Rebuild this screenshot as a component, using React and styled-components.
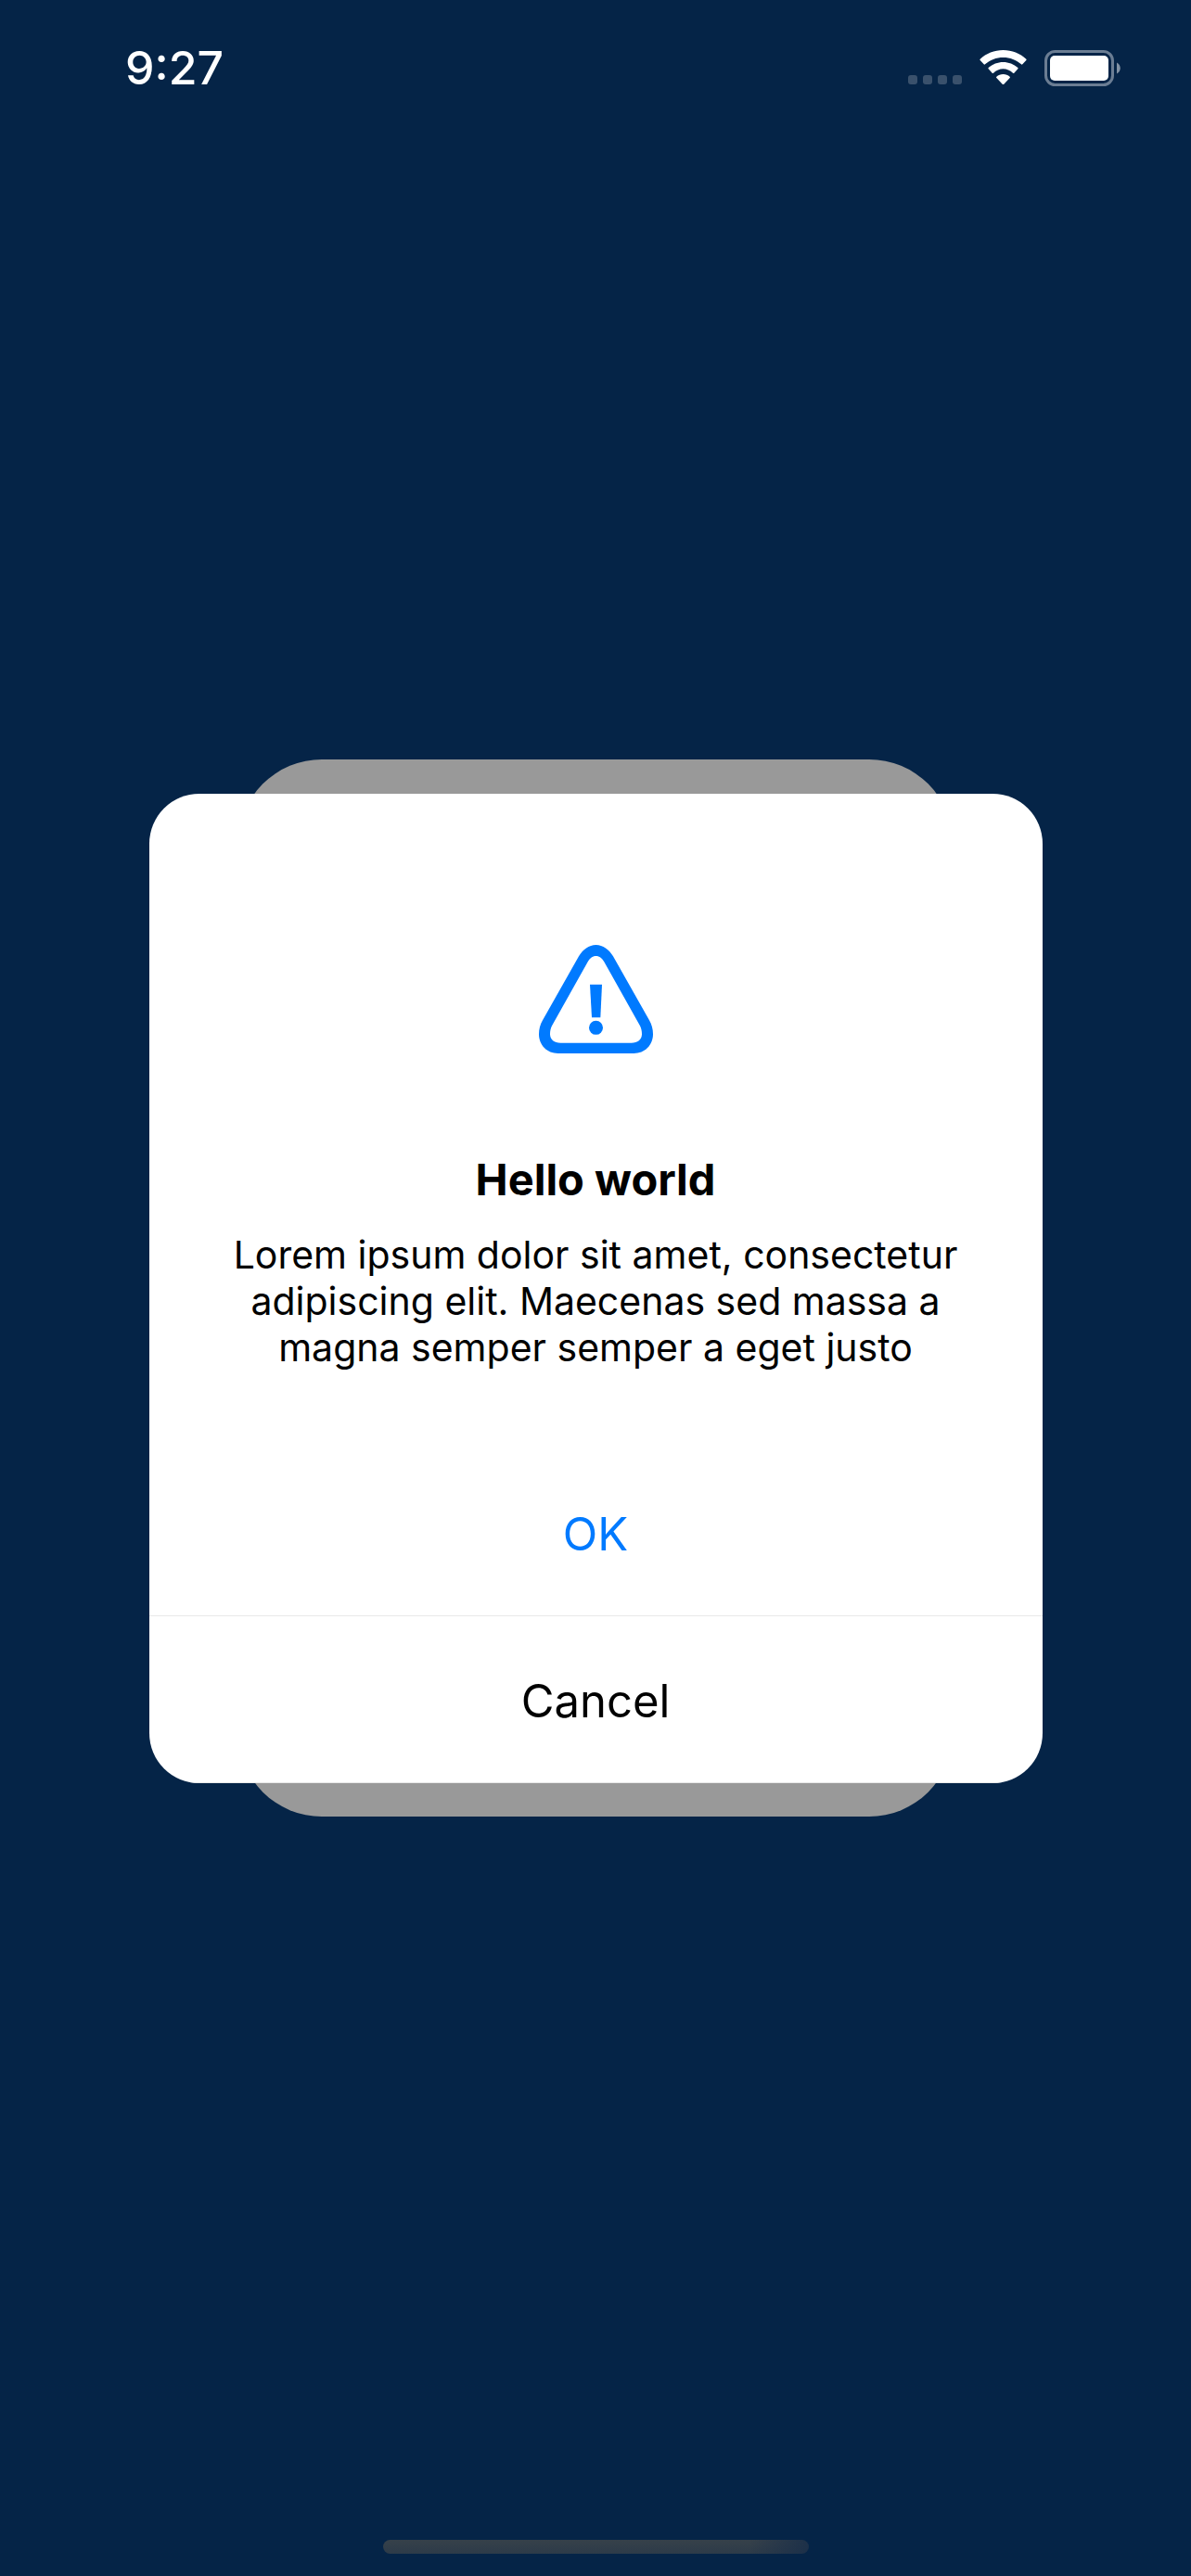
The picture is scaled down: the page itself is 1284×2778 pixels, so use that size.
import React from "react";
import styled, { createGlobalStyle } from "styled-components";

const GlobalStyle = createGlobalStyle`
  *, *::before, *::after { box-sizing: border-box; }
  body {
    margin: 0;
    background: #052447;
    font-family: Inter, "Liberation Sans", sans-serif;
  }
`;

const Screen = styled.div`
  display: grid;
  grid-template-rows: 146px 1fr 146px;
  min-height: 100vh;
  background: #052447;
`;

const StatusBar = styled.header`
  display: flex;
  align-items: center;
  justify-content: space-between;
  padding: 0 76px 0 135px;
`;

const Clock = styled.time`
  color: #fff;
  font-size: 50px;
  line-height: 60px;
  font-weight: 500;
`;

const StatusIcons = styled.div`
  display: flex;
  align-items: center;
  gap: 19px;

  svg { display: block; }
`;

const Stage = styled.main`
  display: grid;
  align-content: center;
  justify-items: center;
`;

const Backdrop = styled.div`
  grid-area: 1 / 1;
  width: 60%;
  border-radius: 90px;
  background: #999;
`;

const Dialog = styled.section`
  grid-area: 1 / 1;
  width: 75%;
  margin: 37px 0 36px;
  border-radius: 54px;
  background: #fff;
  overflow: hidden;
`;

const Message = styled.div`
  display: flex;
  flex-direction: column;
  align-items: center;
  padding: 163px 84px 85px;
  text-align: center;
`;

const Title = styled.h1`
  margin: 106px 0 26px;
  font-size: 47px;
  line-height: 60px;
  font-weight: 700;
  color: #000;
`;

const Copy = styled.p`
  margin: 0;
  font-size: 41px;
  line-height: 50px;
  color: #000;
`;

const Action = styled.button`
  display: block;
  width: 100%;
  height: 180px;
  padding: 4px 0 0;
  border: 0;
  border-bottom: 1px solid #e8e8e8;
  background: transparent;
  color: ${({ $primary }) => ($primary ? "#007aff" : "#000")};
  font-family: inherit;
  font-size: 49px;
  line-height: 60px;
  cursor: pointer;
`;

const HomeArea = styled.footer`
  display: flex;
  align-items: flex-end;
  justify-content: center;
  padding-bottom: 24px;
`;

const HomeIndicator = styled.div`
  width: 459px;
  height: 15px;
  border-radius: 8px;
  background:
    linear-gradient(100deg, transparent 86%, #1c3049 100%),
    linear-gradient(#36414a, #2d3b49);
`;

function SignalDots() {
  return (
    <svg width="58" height="38" viewBox="0 0 58 38" fill="#3a516c" aria-hidden="true">
      {[0, 16, 32, 48].map((x) => (
        <rect key={x} x={x} y="27" width="10" height="10" rx="3" />
      ))}
    </svg>
  );
}

function WifiIcon() {
  return (
    <svg width="51" height="38" viewBox="0 0 153 114" fill="#fff" aria-hidden="true">
      <path d="M76.5 0C105 0 131 11 151 29Q153 31 151 33L139 46Q137 48 135 46C119 32 99 24 76.5 24C54 24 34 32 18 46Q16 48 14 46L2 33Q0 31 2 29C22 11 48 0 76.5 0Z" />
      <path d="M76.5 39C94 39 111 46 124 57Q126 59 124 61L112 74Q110 76 108 74C99 66 88 61 76.5 61C65 61 54 66 45 74Q43 76 41 74L29 61Q27 59 29 57C42 46 59 39 76.5 39Z" />
      <path d="M76.5 78C85 78 92 81 98 86Q100 88 98 90L79 110Q76.5 112 74 110L55 90Q53 88 55 86C61 81 68 78 76.5 78Z" />
    </svg>
  );
}

function BatteryIcon() {
  return (
    <svg width="82" height="39" viewBox="0 0 82 39" aria-hidden="true">
      <rect x="1.5" y="1.5" width="72" height="36" rx="10" fill="none" stroke="#6b7d93" strokeWidth="3" />
      <rect x="6" y="6" width="63" height="27" rx="5" fill="#fff" />
      <path d="M78 13.5C83 16 83 23 78 25.5Z" fill="#8292a4" />
    </svg>
  );
}

function WarningIcon() {
  return (
    <svg width="123" height="117" viewBox="63 57 369 351" fill="#007aff" aria-hidden="true">
      <path
        fillRule="evenodd"
        d="M247.5 57C270 57 290 72 303 94L420 301C428 315 432 330 432 346C432 382 405 408 370 408L125 408C90 408 63 382 63 346C63 330 67 315 75 301L192 94C205 72 225 57 247.5 57ZM247.5 93C236 93 227 101 221 112L105 319C101 327 99 335 99 346C99 364 113 374 133 374L362 374C382 374 396 364 396 346C396 335 394 327 390 319L274 112C268 101 259 93 247.5 93Z"
      />
      <path d="M228 185H267L262 292H234Z" />
      <circle cx="247.5" cy="325" r="22.5" />
    </svg>
  );
}

export default function App() {
  return (
    <>
      <GlobalStyle />
      <Screen>
        <StatusBar>
          <Clock dateTime="09:27">9:27</Clock>
          <StatusIcons>
            <SignalDots />
            <WifiIcon />
            <BatteryIcon />
          </StatusIcons>
        </StatusBar>
        <Stage>
          <Backdrop />
          <Dialog role="alertdialog" aria-labelledby="dialog-title" aria-describedby="dialog-copy">
            <Message>
              <WarningIcon />
              <Title id="dialog-title">Hello world</Title>
              <Copy id="dialog-copy">
                Lorem ipsum dolor sit amet, consectetur adipiscing elit. Maecenas sed massa a magna
                semper semper a eget justo
              </Copy>
            </Message>
            <Action type="button" $primary>OK</Action>
            <Action type="button">Cancel</Action>
          </Dialog>
        </Stage>
        <HomeArea>
          <HomeIndicator />
        </HomeArea>
      </Screen>
    </>
  );
}
